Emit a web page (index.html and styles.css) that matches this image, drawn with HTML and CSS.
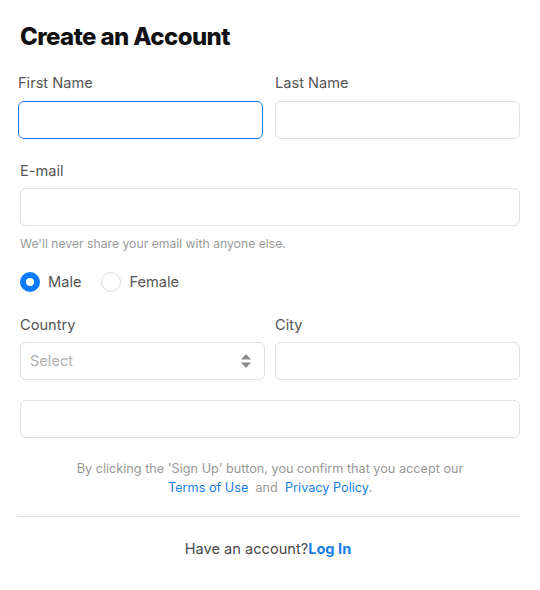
FILE: index.html
```html
<!DOCTYPE html>
<html lang="en">
<head>
<meta charset="utf-8">
<title>Create an Account</title>
<link rel="stylesheet" href="styles.css">
</head>
<body>
<form class="signup">
  <h1 class="title">Create an Account</h1>

  <div class="row row-first">
    <div class="field">
      <label class="label">First Name</label>
      <input class="input input-focus" type="text">
    </div>
    <div class="field">
      <label class="label">Last Name</label>
      <input class="input" type="text">
    </div>
  </div>

  <div class="field field-email">
    <label class="label">E-mail</label>
    <input class="input" type="email">
    <p class="help">We'll never share your email with anyone else.</p>
  </div>

  <div class="radios">
    <label class="radio"><span class="dot dot-on"></span>Male</label>
    <label class="radio"><span class="dot"></span>Female</label>
  </div>

  <div class="row row-loc">
    <div class="field">
      <label class="label">Country</label>
      <div class="select-wrap">
        <select class="input select"><option>Select</option></select>
        <svg class="arrows" width="12" height="16" viewBox="0 0 12 16"><path d="M6 1 L11 6.5 H1 Z M6 15 L11 9.5 H1 Z" fill="#8a8a8a"/></svg>
      </div>
    </div>
    <div class="field">
      <label class="label">City</label>
      <input class="input" type="text">
    </div>
  </div>

  <input class="input input-extra" type="text">

  <p class="terms">By clicking the 'Sign Up' button, you confirm that you accept our<br><a class="link" href="#">Terms of Use</a> &nbsp;and&nbsp; <a class="link" href="#">Privacy Policy</a>.</p>

  <hr class="divider">

  <p class="login">Have an account?<a class="link link-bold" href="#">Log In</a></p>
</form>
</body>
</html>
```

FILE: styles.css
```css
* { box-sizing: border-box; }
html, body { margin: 0; padding: 0; background: #fff; }
body {
  font-family: Inter, "Noto Sans", "Liberation Sans", sans-serif;
  color: #4a4a4a;
}
.signup {
  width: 540px;
  padding: 22px 20px 0 20px;
}
.title {
  margin: 0;
  font-size: 24px;
  line-height: 29px;
  font-weight: 800;
  color: #111;
  letter-spacing: -0.6px;
}
.row {
  display: grid;
  grid-template-columns: 1fr 1fr;
  column-gap: 10px;
}
.row-first {
  margin: 21px 0 0 -2px;
  column-gap: 12px;
}
.field { display: flex; flex-direction: column; }
.label {
  display: block;
  font-size: 14.6px;
  line-height: 22px;
  color: #555;
  margin-bottom: 7px;
}
.input {
  display: block;
  width: 100%;
  height: 38px;
  border: 1px solid #e0e0e0;
  border-radius: 6px;
  background: #fff;
  font-family: inherit;
  font-size: 15px;
  padding: 0 10px;
  margin: 0;
  outline: none;
}
.input-focus { border-color: #1a7cf5; }
.field-email { margin-top: 21px; }
.field-email .label { margin-bottom: 6px; }
.help {
  margin: 10px 0 0 0;
  font-size: 12.2px;
  line-height: 16px;
  color: #9a9a9a;
}
.radios {
  display: flex;
  align-items: center;
  gap: 20px;
  margin-top: 20px;
  height: 20px;
}
.radio {
  display: flex;
  align-items: center;
  gap: 8px;
  font-size: 14.6px;
  color: #555;
}
.dot {
  width: 20px;
  height: 20px;
  border-radius: 50%;
  border: 1px solid #dcdcdc;
  background: #fff;
}
.dot-on { border: 6px solid #0a7aff; }
.row-loc { margin-top: 22px; }
.row-loc .label { margin-bottom: 6px; }
.select-wrap { position: relative; }
.select {
  appearance: none;
  -webkit-appearance: none;
  color: #b0b0b0;
  font-size: 14.6px;
  padding-left: 9px;
}
.arrows {
  position: absolute;
  right: 13px;
  top: 11px;
  pointer-events: none;
}
.input-extra { margin-top: 20px; }
.terms {
  margin: 21px 0 0 0;
  text-align: center;
  font-size: 12.7px;
  line-height: 19px;
  color: #999;
}
.link { color: #1a7ee8; text-decoration: none; }
.link-bold { font-weight: 700; }
.divider {
  border: 0;
  border-top: 1px solid #dcdcdc;
  margin: 19px 0 0 -2px;
}
.login {
  margin: 21px 2px 0 -2px;
  text-align: center;
  font-size: 14.6px;
  line-height: 22px;
  color: #4a4a4a;
}
```
